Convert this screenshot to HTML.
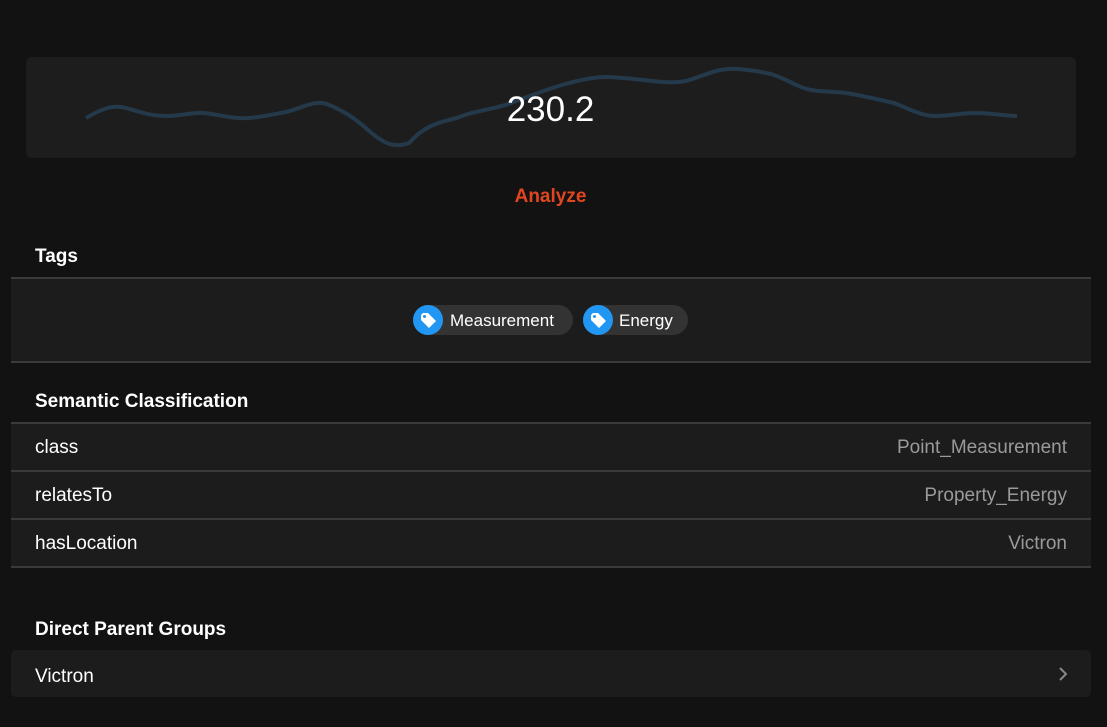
<!DOCTYPE html>
<html><head><style>
body{margin:0;width:1107px;height:727px;background:#121212;font-family:"Liberation Sans",sans-serif;color:#fff;position:relative;overflow:hidden}
.card{position:absolute;left:26px;top:57px;width:1050px;height:101px;background:#1d1d1d;border-radius:6px}
.val{position:absolute;left:0;width:1101px;top:90px;text-align:center;font-size:35px;color:#fff}
.an{position:absolute;left:0;width:1101px;top:186px;text-align:center;font-size:19px;color:#e0461f;font-weight:bold}
.h{position:absolute;left:35px;font-size:19px;font-weight:bold}
.box{position:absolute;left:11px;width:1080px;background:#1c1c1c}
.row{height:46px;border-bottom:2px solid #3a3a3a;position:relative;font-size:19px}
.row span{position:absolute;left:24px;top:13px}
.row b{position:absolute;right:24px;top:13px;font-weight:normal;color:#9a9a9a}
.chip{position:absolute;top:305px;height:30px;background:#333;border-radius:15px;font-size:17px;line-height:31px}
.ic{position:absolute;left:0;top:0;width:30px;height:30px;border-radius:15px;background:#2196f3}
</style></head><body>
<div class="card"></div>
<svg style="position:absolute;left:0;top:0" width="1107" height="727"><path d="M86,118 C100,110 112,104 126,108 C140,112 150,116 167,116 C182,116 192,112 204,113 C222,115 232,119 249,118 C262,117 275,114 286,112 C302,108 314,100 327,104 C342,110 355,118 368,130 C385,145 395,148 409,143 C425,125 440,122 457,118 C475,110 493,110 511,103 C545,90 580,77 607,77 C640,78 665,85 686,81 C705,76 715,68 737,69 C755,70 760,72 771,74 C790,80 800,90 819,91 C832,92 840,92 846,93 C865,96 880,100 894,103 C912,110 922,116 935,116 C950,116 960,113 976,113 C992,113 1005,116 1017,116" fill="none" stroke="#24394a" stroke-width="4"/></svg>
<div class="val">230.2</div>
<div class="an">Analyze</div>
<div class="h" style="top:246px">Tags</div>
<div class="box" style="top:277px;height:82px;border-top:2px solid #3a3a3a;border-bottom:2px solid #3a3a3a"></div>
<div class="chip" style="left:413px;width:160px"><div class="ic"><svg width="30" height="30"><path d="M8,10 L8,15 L16,23 L23,16 L15,8 L10,8 Z" fill="#fff"/><circle cx="11.5" cy="11.5" r="1.5" fill="#2196f3"/></svg></div><span style="position:absolute;left:37px">Measurement</span></div>
<div class="chip" style="left:583px;width:105px"><div class="ic"><svg width="30" height="30"><path d="M8,10 L8,15 L16,23 L23,16 L15,8 L10,8 Z" fill="#fff"/><circle cx="11.5" cy="11.5" r="1.5" fill="#2196f3"/></svg></div><span style="position:absolute;left:36px">Energy</span></div>
<div class="h" style="top:391px">Semantic Classification</div>
<div class="box" style="top:422px;border-top:2px solid #3a3a3a">
<div class="row"><span>class</span><b>Point_Measurement</b></div>
<div class="row"><span>relatesTo</span><b>Property_Energy</b></div>
<div class="row"><span>hasLocation</span><b>Victron</b></div>
</div>
<div class="h" style="top:619px">Direct Parent Groups</div>
<div class="box" style="top:650px;height:47px;border-radius:5px;font-size:19px"><span style="position:absolute;left:24px;top:16px">Victron</span><svg style="position:absolute;right:22px;top:16px" width="12" height="16"><path d="M3,2 L9,8 L3,14" fill="none" stroke="#888" stroke-width="2"/></svg></div>
</body></html>
